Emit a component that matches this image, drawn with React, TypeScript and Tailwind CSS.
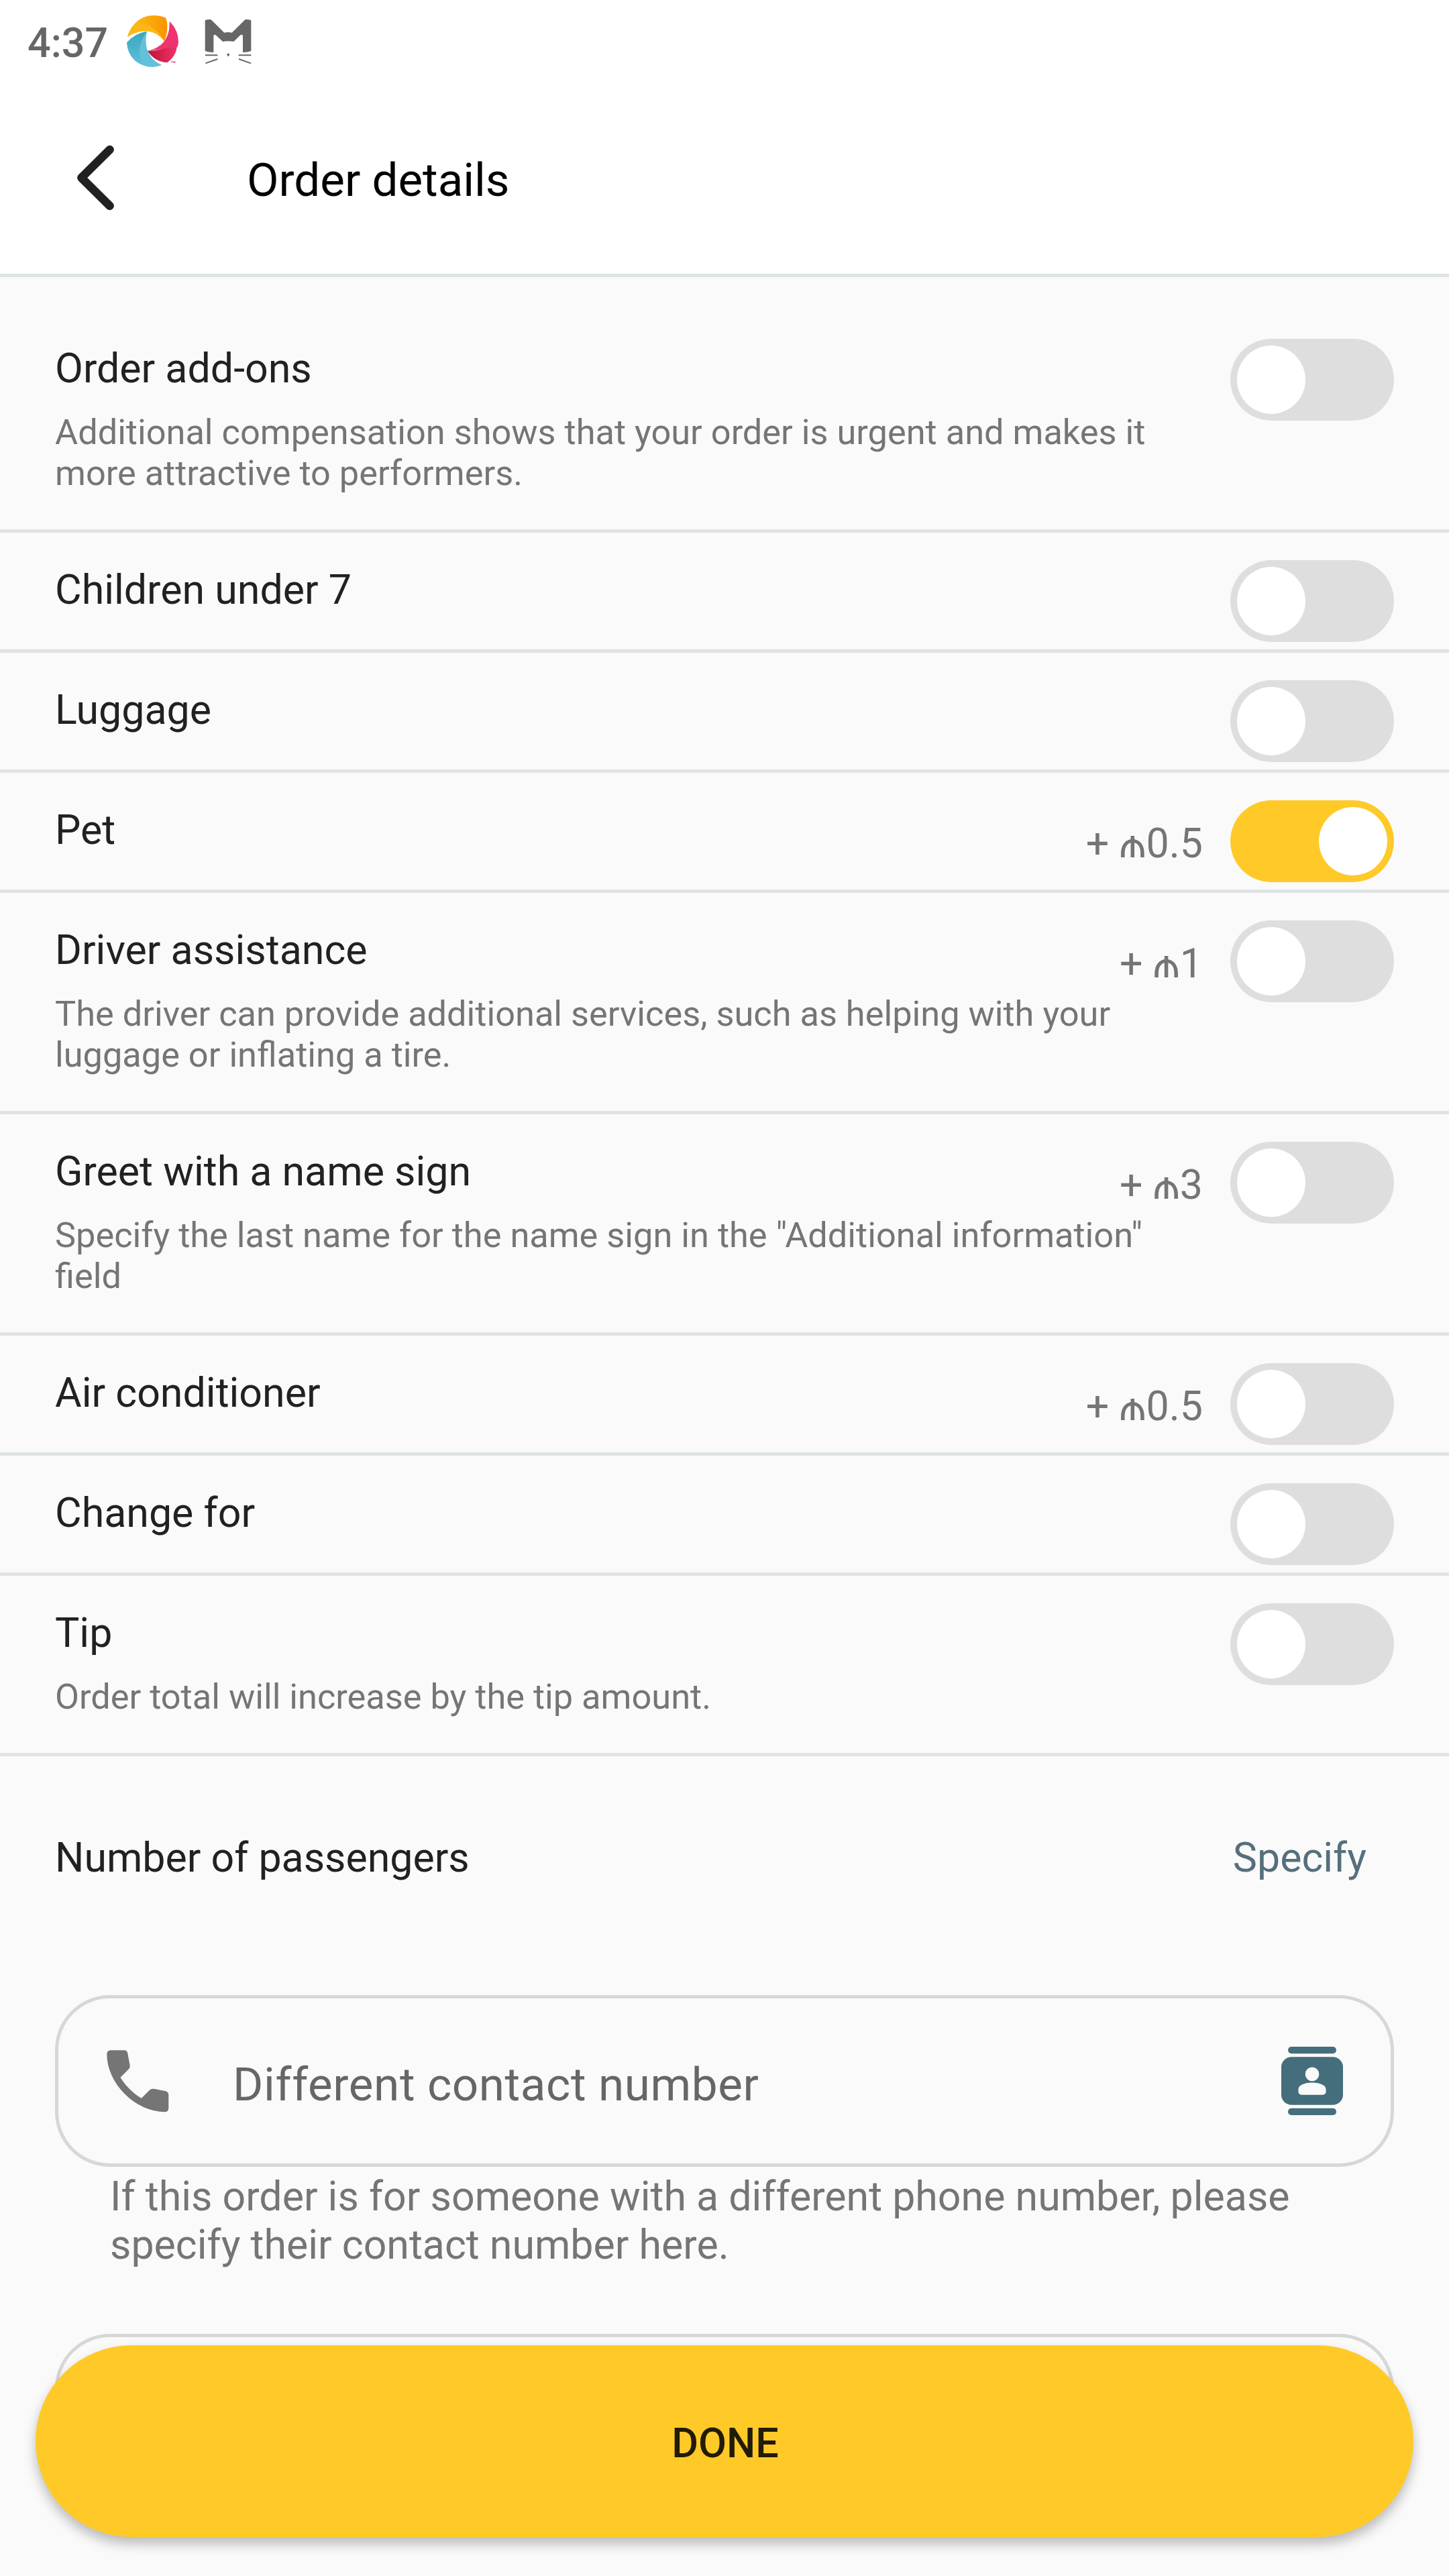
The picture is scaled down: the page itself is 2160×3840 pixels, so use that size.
type Option = {
  title: string;
  desc?: string;
  price?: string;
  on?: boolean;
  height: string;
};

const options: Option[] = [
  {
    title: 'Order add-ons',
    desc: 'Additional compensation shows that your order is urgent and makes it\nmore attractive to performers.',
    height: 'h-[330px]',
  },
  { title: 'Children under 7', height: 'h-[179px]' },
  { title: 'Luggage', height: 'h-[179px]' },
  { title: 'Pet', price: '+ ₼0.5', on: true, height: 'h-[179px]' },
  {
    title: 'Driver assistance',
    desc: 'The driver can provide additional services, such as helping with your\nluggage or inflating a tire.',
    price: '+ ₼1',
    height: 'h-[330px]',
  },
  {
    title: 'Greet with a name sign',
    desc: 'Specify the last name for the name sign in the "Additional information"\nfield',
    price: '+ ₼3',
    height: 'h-[330px]',
  },
  { title: 'Air conditioner', price: '+ ₼0.5', height: 'h-[179px]' },
  { title: 'Change for', height: 'h-[179px]' },
  { title: 'Tip', desc: 'Order total will increase by the tip amount.', height: 'h-[269px]' },
];

function StatusIcons() {
  return (
    <svg className="h-[90px] w-[210px]" viewBox="0 0 630 270">
      <defs>
        <linearGradient id="orange" x1="0" x2="1">
          <stop offset="0.3" stopColor="#fdb515" />
          <stop offset="1" stopColor="#fb9300" />
        </linearGradient>
        <linearGradient id="red" x1="0" x2="1">
          <stop offset="0" stopColor="#bd1237" />
          <stop offset="1" stopColor="#ee336a" />
        </linearGradient>
        <linearGradient id="teal" x1="0" y1="0" x2="0" y2="1">
          <stop offset="0" stopColor="#3aa5c0" />
          <stop offset="1" stopColor="#62c1da" />
        </linearGradient>
      </defs>
      <path d="M30 105 Q38 73 62 46 Q96 9 145 9 Q175 9 199 19 Q207 26 208 55 Q208 95 195 124 Q163 83 118 79 Q68 78 30 105Z" fill="url(#orange)" />
      <path d="M30 105 Q38 75 66 44 Q154 46 195 124 Q163 83 118 79 Q68 78 30 105Z" fill="#fdb913" />
      <path d="M120 167 Q190 168 244 130 L250 160 Q240 197 208 220 Q150 216 120 167Z" fill="url(#red)" />
      <path d="M120 167 Q222 145 218 35 Q258 75 258 128 Q257 140 253 152 Q215 152 190 158 Q150 164 120 167Z" fill="#ee336e" />
      <path d="M117 80 Q65 87 27 130 Q29 177 61 209 Q95 239 142 239 Q163 239 182 231 Q134 211 117 160 Q106 120 117 80Z" fill="url(#teal)" />
      <path d="M117 80 Q76 140 86 190 Q89 215 97 230 Q118 239 142 239 Q163 239 182 231 Q134 211 117 160 Q106 120 117 80Z" fill="#62c1da" />
      <text x="225" y="222" fontSize="13" fontWeight="700" fill="#ee336e" fontFamily="Roboto, sans-serif">TM</text>
      <path
        d="M377 31 Q388 26 403 27 L463 86 Q480 82 497 86 L557 27 Q572 26 583 31 V168 Q565 175 546 174 V98 Q540 93 535 97 L505 126 Q480 122 456 126 L425 97 Q419 93 415 98 V174 Q395 175 377 168Z"
        fill="#676767"
      />
      <path d="M474 180 H487 L483 192 H479Z" fill="#676767" />
      <path d="M378 187H433M527 187H583M379 223L433 204M528 204L582 223" stroke="#676767" strokeWidth="6" fill="none" />
    </svg>
  );
}

function Toggle({ on }: { on?: boolean }) {
  return (
    <div
      className={
        on
          ? 'mt-[41px] flex h-[122px] w-[244px] shrink-0 justify-end rounded-full bg-[#ffca28] p-[10px]'
          : 'mt-[41px] flex h-[122px] w-[244px] shrink-0 justify-start rounded-full bg-[#dedede] p-[10px]'
      }
    >
      <div className="size-[102px] rounded-full bg-white" />
    </div>
  );
}

function OptionRow({ title, desc, price, on, height }: Option) {
  return (
    <div className={`${height} flex border-b-[5px] border-[#dee3e6] px-[82px]`}>
      <div className="min-w-0 flex-1 pt-[50px]">
        <div className="text-[60.9px] leading-[72px] text-[#212121]">{title}</div>
        {desc && (
          <div className="mt-[28px] whitespace-pre text-[52.32px] leading-[61px] text-[#757575]">{desc}</div>
        )}
      </div>
      {price && (
        <div className="mr-[41px] shrink-0 pt-[70px] text-[60.9px] leading-[72px] whitespace-nowrap text-[#757575]">
          {price}
        </div>
      )}
      <Toggle on={on} />
    </div>
  );
}

export default function App() {
  return (
    <div className="relative h-[3840px] w-[2160px] overflow-hidden bg-[#fafafa] font-[Roboto,sans-serif]">
      <header className="h-[413px] border-b-[5px] border-[#dde3e5] bg-white">
        <div className="flex h-[180px] items-start">
          <div className="w-[180px] pt-[28px] pl-[41px] text-[61px] leading-[72px] font-medium text-[#666666]">4:37</div>
          <div className="pt-[20px]">
            <StatusIcons />
          </div>
        </div>
        <div className="flex items-start pl-[108px]">
          <svg className="mt-[30px] h-[110px] w-[70px]" viewBox="0 0 70 110" fill="none">
            <path d="M55.7 13L13.3 55L55.7 97" stroke="#212121" strokeWidth="12.4" strokeLinecap="round" strokeLinejoin="round" />
          </svg>
          <h1 className="mt-[48px] ml-[190px] text-[69.1px] leading-[81px] text-black">Order details</h1>
        </div>
      </header>

      <section className="pt-[51px]">
        {options.map((o) => (
          <OptionRow key={o.title} {...o} />
        ))}
      </section>

      <div className="flex h-[356px] justify-between pt-[116px] pr-[123px] pl-[82px] text-[60.85px] leading-[72px]">
        <div className="text-[#212121]">Number of passengers</div>
        <div className="text-[#566f7c]">Specify</div>
      </div>

      <div className="mx-[82px] flex h-[256px] items-start rounded-[82px] border-[5px] border-[#d7d7d7]">
        <svg className="mt-[61.5px] ml-[56.5px] size-[122.6px]" viewBox="0 0 24 24" fill="#757575">
          <path d="M19.95 21q-3.125 0-6.175-1.362T8.225 15.775 4.363 10.225 3 4.05q0-.45.3-.75t.75-.3H8.1q.35 0 .625.238t.325.562l.65 3.5q.05.4-.025.675T9.4 8.45L6.975 10.9q.5.925 1.187 1.787t1.513 1.663q.775.775 1.625 1.438T13.1 17l2.35-2.35q.225-.225.588-.337t.712-.063l3.45.7q.35.1.575.363T21 15.9v4.05q0 .45-.3.75t-.75.3z" />
        </svg>
        <div className="mt-[88px] ml-[81px] flex-1 text-[69.2px] leading-[81px] tracking-[0.61px] text-[#666666]">
          Different contact number
        </div>
        <svg className="mt-[71.5px] mr-[71px] h-[102px] w-[92px]" viewBox="0 0 92 102" fill="#446e7b">
          <rect x="10" y="0" width="72" height="10.2" rx="5.1" />
          <rect x="0" y="15.3" width="92" height="71.4" rx="15.3" />
          <rect x="10" y="91.8" width="72" height="10.2" rx="5.1" />
          <circle cx="46" cy="40.9" r="10.3" fill="#fafafa" />
          <path d="M30.2 71.8Q25.4 71.4 25.4 66.6V64Q25.5 59 30 57Q36.5 53.6 46 53.6T62 57Q66.5 59 66.6 64V66.6Q66.6 71.4 61.8 71.8Z" fill="#fafafa" />
        </svg>
      </div>
      <p className="ml-[164px] pt-[9px] text-[60.87px] leading-[72px] whitespace-pre text-[#757575]">
        {'If this order is for someone with a different phone number, please\nspecify their contact number here.'}
      </p>
      <div className="mx-[82px] mt-[96px] h-[256px] rounded-[82px] border-[5px] border-[#d7d7d7]" />

      <button className="absolute top-[3496px] left-[53px] flex h-[286px] w-[2054px] items-center justify-center rounded-full bg-[#ffca28] pt-[6px] pl-[2px] text-[61px] leading-[72px] font-medium text-[#221b06] shadow-[0_10px_18px_rgba(0,0,0,0.26)]">
        DONE
      </button>
    </div>
  );
}
